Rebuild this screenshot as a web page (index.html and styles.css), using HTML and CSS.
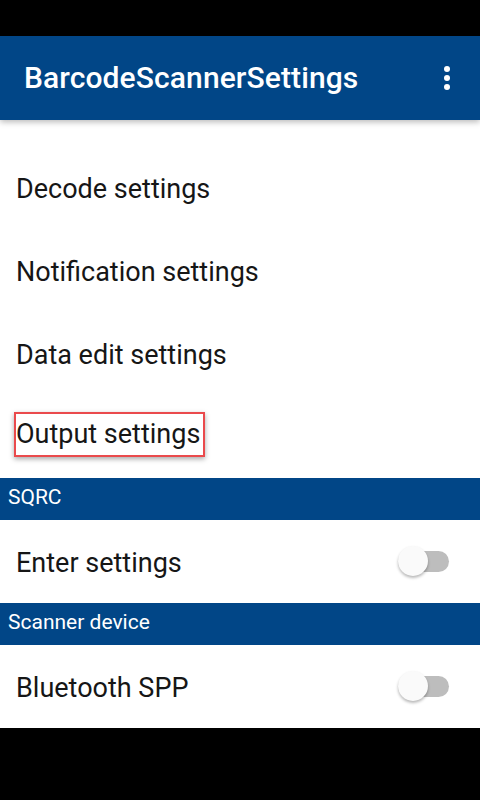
FILE: index.html
```html
<!DOCTYPE html>
<html>
<head>
<meta charset="utf-8">
<link rel="stylesheet" href="styles.css">
</head>
<body>
<div class="screen">
  <div class="statusbar"></div>
  <header class="appbar">
    <h1 class="title">BarcodeScannerSettings</h1>
    <div class="overflow" aria-label="More options">
      <svg width="6" height="24" viewBox="0 0 6 24"><circle cx="3" cy="3" r="3" fill="#fff"/><circle cx="3" cy="12" r="3" fill="#fff"/><circle cx="3" cy="21" r="3" fill="#fff"/></svg>
    </div>
  </header>
  <main class="content">
    <div class="list">
      <div class="row"><span class="label peek">Scan settings</span></div>
      <div class="row"><span class="label">Decode settings</span></div>
      <div class="row"><span class="label">Notification settings</span></div>
      <div class="row"><span class="label">Data edit settings</span></div>
      <div class="row"><span class="label highlight">Output settings</span></div>
      <div class="section">SQRC</div>
      <div class="row"><span class="label">Enter settings</span><span class="switch"><span class="track"></span><span class="thumb"></span></span></div>
      <div class="section">Scanner device</div>
      <div class="row"><span class="label">Bluetooth SPP</span><span class="switch"><span class="track"></span><span class="thumb"></span></span></div>
    </div>
  </main>
  <div class="navbar"></div>
</div>
</body>
</html>
```
FILE: styles.css
```css
html, body {
  margin: 0;
  padding: 0;
  background: #000;
}
body {
  font-family: Roboto, "Noto Sans", "Liberation Sans", sans-serif;
}
.screen {
  width: 480px;
  height: 800px;
  display: flex;
  flex-direction: column;
  background: #fff;
  overflow: hidden;
}
.statusbar {
  height: 36px;
  flex: none;
  background: #000;
}
.appbar {
  height: 84px;
  flex: none;
  background: #014687;
  display: flex;
  align-items: center;
  justify-content: space-between;
  padding: 0 30px 0 24px;
  box-sizing: border-box;
  position: relative;
  z-index: 2;
  box-shadow: 0 2px 6px rgba(0,0,0,0.28);
}
.title {
  margin: 0;
  color: #fff;
  font-size: 30px;
  font-weight: 500;
  letter-spacing: 0.1px;
  padding-bottom: 2px;
}
.overflow {
  display: flex;
  align-items: center;
  height: 24px;
  margin-top: -1px;
}
.overflow svg { display: block; }
.content {
  flex: 1;
  overflow: hidden;
  background: #fff;
  position: relative;
  z-index: 1;
}
.list {
  margin-top: -57px;
  display: flex;
  flex-direction: column;
}
.row {
  height: 83px;
  display: flex;
  align-items: center;
  justify-content: space-between;
  padding: 0 31px 0 16px;
  box-sizing: border-box;
}
.label {
  font-size: 27px;
  color: #161616;
  line-height: 34px;
  padding-top: 3px;
}
.peek {
  padding-top: 0;
  padding-bottom: 3px;
}
.highlight {
  margin-left: -2px;
  border: 2px solid #ea4a4c;
  line-height: 41px;
  padding: 0 3px 0 0;
  margin-top: -4px;
  box-shadow: 0 2px 5px rgba(0,0,0,0.35);
}
.section {
  height: 42px;
  background: #014687;
  color: #fff;
  font-size: 21px;
  line-height: 38px;
  padding-left: 8px;
  box-sizing: border-box;
}
.switch {
  position: relative;
  width: 51px;
  height: 30px;
  display: block;
}
.track {
  position: absolute;
  left: 0;
  right: 0;
  top: 4px;
  height: 21px;
  border-radius: 11px;
  background: #bdbdbd;
}
.thumb {
  position: absolute;
  left: 0;
  top: -1px;
  width: 30px;
  height: 30px;
  border-radius: 50%;
  background: #fafafa;
  box-shadow: 0 2px 3px rgba(0,0,0,0.28);
}
.navbar {
  height: 72px;
  flex: none;
  background: #000;
}
```
